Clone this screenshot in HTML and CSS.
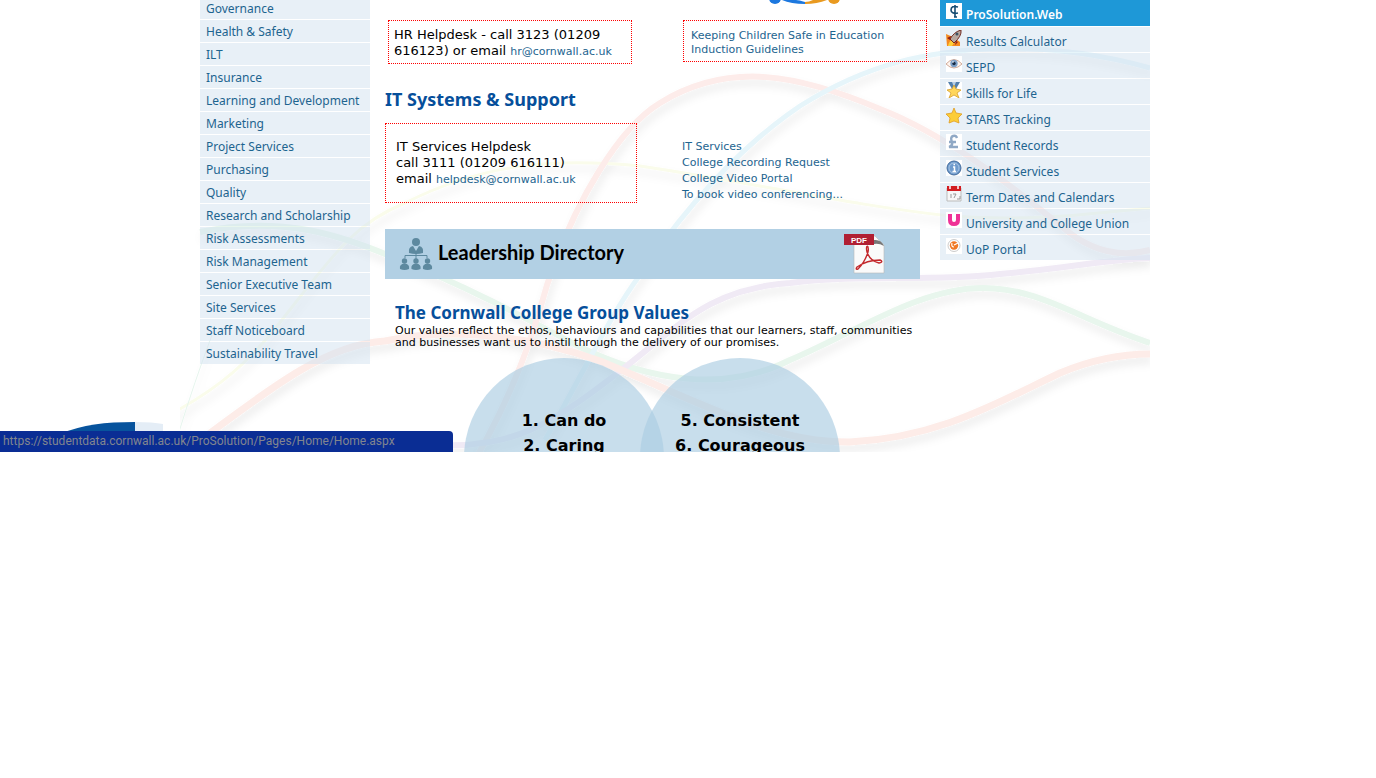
FILE: index.html
```html
<!DOCTYPE html>
<html lang="en">
<head>
<meta charset="utf-8">
<title>Staff Intranet</title>
<link rel="stylesheet" href="styles.css">
</head>
<body>
<div class="screen">
  <svg class="corner-logo" width="100" height="30" viewBox="0 0 100 30" aria-hidden="true"><path d="M0 11C18 3 42 0 72 0V30H0Z" fill="#07539d"/><path d="M72 0Q90 0 100 2V30H72Z" fill="#e4edf6"/></svg>
  <div class="page">
    <svg class="ribbons" viewBox="180 0 970 452" preserveAspectRatio="none" aria-hidden="true">
      <defs><filter id="soft" x="-5%" y="-5%" width="110%" height="115%"><feDropShadow dx="2" dy="6" stdDeviation="4" flood-color="#000" flood-opacity=".08"/></filter></defs>
      <g fill="none" filter="url(#soft)">
        <path d="M150 425C210 395 240 370 270 335C330 260 350 225 405 203C480 165 550 157 640 166C760 184 850 205 950 216C1030 222 1090 214 1150 208" stroke="#fafceb" stroke-width="3"/>
        <path d="M178 435Q195 380 212 335" stroke="#e6f5ed" stroke-width="1"/>
        <path d="M200 232C280 215 340 235 390 256C460 283 520 315 580 347C650 381 725 393 790 360C860 330 920 288 983 288C1040 288 1080 320 1150 343" stroke="#e8f6ed" stroke-width="6"/>
        <path d="M475 460C515 390 533 335 547 285C575 200 620 127 660 103C730 60 800 75 880 109C960 140 1040 210 1060 225C1090 252 1120 258 1150 250" stroke="#fdecea" stroke-width="6"/>
        <path d="M545 440C585 370 610 315 640 275C680 215 735 150 800 106C870 62 930 51 1000 48Q1080 48 1150 68" stroke="#e6f5fa" stroke-width="5"/>
        <path d="M440 445C510 448 550 426 615 375C680 325 710 288 790 283C860 274 930 282 1000 274C1070 268 1110 259 1150 258" stroke="#f0eaf5" stroke-width="6"/>
        <path d="M190 448C280 380 330 344 385 341C460 325 540 339 600 361C700 402 770 443 850 442C940 438 1000 401 1060 373Q1105 354 1150 354" stroke="#fdece8" stroke-width="7"/>
      </g>
    </svg>

    <nav class="departments" aria-label="Departments">
      <a href="#">Governance</a>
      <a href="#">Health &amp; Safety</a>
      <a href="#">ILT</a>
      <a href="#">Insurance</a>
      <a href="#">Learning and Development</a>
      <a href="#">Marketing</a>
      <a href="#">Project Services</a>
      <a href="#">Purchasing</a>
      <a href="#">Quality</a>
      <a href="#">Research and Scholarship</a>
      <a href="#">Risk Assessments</a>
      <a href="#">Risk Management</a>
      <a href="#">Senior Executive Team</a>
      <a href="#">Site Services</a>
      <a href="#">Staff Noticeboard</a>
      <a href="#">Sustainability Travel</a>
    </nav>

    <main class="content">
      <svg class="people-logo" width="72" height="5" viewBox="0 0 72 5" aria-hidden="true"><path d="M13 0Q22 4 36 4V2Q30 0 27 0Z" fill="#1d78df"/><path d="M36 4Q48 4 58 0H44Q40 2 36 2Z" fill="#e99a20"/><circle cx="6" cy="-2" r="6" fill="#1d78df"/><circle cx="65" cy="-2" r="6" fill="#e99a20"/></svg>
      <div class="hr-row">
        <p class="box hr-box">HR Helpdesk - call 3123 (01209 616123) or email <a href="#">hr@cornwall.ac.uk</a></p>
        <div class="box guide-box"><a href="#">Keeping Children Safe in Education</a><a href="#">Induction Guidelines</a></div>
      </div>
      <h2 class="it-title">IT Systems &amp; Support</h2>
      <div class="it-row">
        <p class="box it-box">IT Services Helpdesk<br>call 3111 (01209 616111)<br>email <a href="#">helpdesk@cornwall.ac.uk</a></p>
        <div class="it-links"><a href="#">IT Services</a><a href="#">College Recording Request</a><a href="#">College Video Portal</a><a href="#">To book video conferencing...</a></div>
      </div>
      <a class="banner" href="#">
        <svg width="34" height="34" viewBox="0 0 34 34" fill="#5d899f" aria-hidden="true"><circle cx="17" cy="5" r="4"/><path d="M10 16Q9 10 14 9L17 14L20 9Q25 10 24 16Q17 18 10 16Z"/><path d="M17 16V23M6 21V18.500H28V21" fill="none" stroke="#5d899f"/><g id="member"><circle cx="5.500" cy="24" r="2.700"/><path d="M1 32Q0 27 5.500 26.500Q11 27 10 32Q5.500 34 1 32Z"/></g><use href="#member" x="11.500"/><use href="#member" x="23"/></svg>
        <span class="banner-text">Leadership Directory</span>
        <svg width="42" height="42" viewBox="0 0 42 42" aria-hidden="true"><path d="M11 3H32L41 12V40H11Z" fill="#fafafa" stroke="#bbb" stroke-width=".6"/><path d="M31 7Q38 6 41 13Q36 10 31 11Z" fill="#777"/><rect x="1" y="1" width="30" height="11" fill="#b01f33"/><text x="8" y="10" class="pdf-label">PDF</text><path d="M24 13Q26 14 25 19Q22 29 15 36Q12 37 14 34Q24 27 37 27Q41 29 36 30Q27 28 24 19Q23 15 24 13" fill="none" stroke="#c3282c" stroke-width="1.400"/></svg>
      </a>
      <section class="values">
        <h2>The Cornwall College Group Values</h2>
        <p>Our values reflect the ethos, behaviours and capabilities that our learners, staff, communities and businesses want us to instil through the delivery of our promises.</p>
        <div class="circles">
          <div class="circle">1. Can do<br>2. Caring</div>
          <div class="circle">5. Consistent<br>6. Courageous</div>
        </div>
      </section>
    </main>

    <nav class="systems" aria-label="Systems">
      <a class="active" href="#"><svg viewBox="0 0 16 16"><path fill="#fff" d="M0 0h16v16H0z"/><path d="M12 4Q5 2 5 7Q5 11 12 10M9 2V14M8 14H11" fill="none" stroke="#174d72" stroke-width="1.600"/></svg>ProSolution.Web</a>
      <a href="#"><svg viewBox="0 0 16 16"><path d="M0 4L7 7L14 12V16H1Z" fill="#f58a20"/><path d="M2 16Q3 11 6 10L8 13L6 16Z" fill="#ffcf39"/><path d="M4 9Q8 2 15 0Q16 6 8 13Z" fill="#b8a8a0" stroke="#732b20"/><path d="M5 6L1 8L4 10M10 11L9 15L12 12" fill="#8e2019"/><circle cx="11" cy="4" r="1.500" fill="#3d5364"/></svg>Results Calculator</a>
      <a href="#"><svg viewBox="0 0 16 16"><path fill="#fff" d="M0 0h16v16H0z"/><path d="M0 8Q8-1 16 8Q8 16 0 8" fill="#fff5ee" stroke="#d1ab9a"/><circle cx="8" cy="7.500" r="3.700" fill="#7c9fc6"/><circle cx="8" cy="7.500" r="1.700" fill="#182b45"/><circle cx="7" cy="6" r=".8" fill="#fff"/></svg>SEPD</a>
      <a href="#"><svg viewBox="0 0 16 16"><path fill="#fff" d="M0 0h16v16H0z"/><path d="M2 0H14L10 7H6Z" fill="#527fac"/><path d="M6 0H10L8 5Z" fill="#b9cfe4"/><path d="M8 3L10 7L15 8L11 11L13 16L8 13L3 16L5 11L1 8L6 7Z" fill="#ffd65b" stroke="#d6a02c" stroke-width=".8"/></svg>Skills for Life</a>
      <a href="#"><svg viewBox="0 0 16 16"><path d="M8 0L10 5L16 6L12 10L13 15L8 13L3 15L4 10L0 6L6 5Z" fill="#fccd38" stroke="#df9d22" stroke-width=".8"/></svg>STARS Tracking</a>
      <a href="#"><svg viewBox="0 0 16 16"><path fill="#fff" d="M0 0h16v16H0z"/><path d="M11 4Q10 1 7 2Q4 3 6 8Q7 12 3 13H12M3 8H10" fill="none" stroke="#8fa8c5" stroke-width="2.400"/></svg>Student Records</a>
      <a href="#"><svg viewBox="0 0 16 16"><path fill="#fff" d="M0 0h16v16H0z"/><circle cx="8" cy="8" r="7" fill="#6f9bcd" stroke="#416b9c"/><circle cx="8" cy="8" r="5" fill="none" stroke="#a9c5e3"/><path d="M7 7H8.500V11M6.500 11.500H10M7.500 4.500H9" stroke="#fff" stroke-width="1.500" fill="none"/></svg>Student Services</a>
      <a href="#"><svg viewBox="0 0 16 16"><path fill="#f7f7f7" stroke="#bbb" d="M1 2H15V15H1z"/><path d="M1 0H15V5H1Z" fill="#d21c20"/><path d="M4 0V3M12 0V3" stroke="#fff" stroke-width="1.500"/><path d="M5 8V12M7 8H10L8 12M11 13H14V10" stroke="#999" fill="none"/></svg>Term Dates and Calendars</a>
      <a href="#"><svg viewBox="0 0 16 16"><path fill="#fff" d="M0 0h16v16H0z"/><path d="M4 2V8Q4 12 8 12Q12 12 12 8V2" fill="none" stroke="#ef3297" stroke-width="4"/></svg>University and College Union</a>
      <a href="#"><svg viewBox="0 0 16 16"><path fill="#fff" d="M0 0h16v16H0z"/><circle cx="8" cy="7.500" r="6" fill="none" stroke="#ccc"/><circle cx="8" cy="7.500" r="4.200" fill="#f07925"/><path d="M8 7L12 5M6 5Q5 9 8 9" stroke="#fff" stroke-width="1.200" fill="none"/></svg>UoP Portal</a>
    </nav>
  </div>
  <div class="status">https://studentdata.cornwall.ac.uk/ProSolution/Pages/Home/Home.aspx</div>
</div>
</body>
</html>
```
FILE: styles.css
```css
* { box-sizing: border-box; }
body {
  margin: 0;
  background: #fff;
  color: #000;
  font-family: "DejaVu Sans", Verdana, sans-serif;
  font-size: 13px;
}
a { color: #1d648f; text-decoration: none; }
h2, p { margin: 0; }
h2 {
  color: #064f9b;
  font-family: "Noto Sans", sans-serif;
  font-size: 17px;
  line-height: 20px;
}
.screen {
  position: relative;
  height: 452px;
  overflow: hidden;
  padding-right: 26px;
}
.page {
  position: relative;
  display: grid;
  grid-template-columns: 170px minmax(0, 1fr) 210px;
  align-items: start;
  max-width: 950px;
  height: 100%;
  margin: 0 auto;
}
.ribbons {
  position: absolute;
  top: 0;
  left: -20px;
  width: calc(100% + 20px);
  height: 452px;
}
.corner-logo { position: absolute; left: 63px; bottom: 0; }
.departments, .systems {
  position: relative;
  display: flex;
  flex-direction: column;
  gap: 1px;
  font-family: "Noto Sans", sans-serif;
  font-size: 12px;
}
.departments { margin-top: -3px; }
.departments a, .systems a { background: rgba(210, 226, 240, 0.52); }
.departments a { padding: 2px 6px 0; line-height: 20px; }
.systems a {
  display: flex;
  align-items: flex-start;
  gap: 4px;
  height: 25px;
  padding: 3px 6px 0;
  line-height: 24px;
  white-space: nowrap;
}
.systems svg { flex: none; width: 16px; height: 16px; }
.systems .active { height: 26px; background: #1e98d7; color: #fff; font-weight: 600; }
.content { position: relative; padding: 20px 20px 0 15px; }
.people-logo { position: absolute; top: 0; left: 399px; }
.box { border: 1px dotted #f00; }
.box a, .it-links a { font-size: 11px; }
.box p a, p.box a { line-height: 1; }
.hr-row {
  display: grid;
  grid-template-columns: 244px 244px;
  align-items: start;
  gap: 51px;
  margin-left: 3px;
}
.hr-box { padding: 6px 5px 4px; line-height: 16px; }
.guide-box { display: flex; flex-direction: column; padding: 8px 7px 4px; line-height: 14px; }
.it-title { margin-top: 25px; font-size: 18px; }
.it-row {
  display: grid;
  grid-template-columns: 252px 1fr;
  gap: 45px;
  margin-top: 14px;
}
.it-box { padding: 15px 10px; line-height: 16px; }
.it-links { display: flex; flex-direction: column; padding-top: 16px; line-height: 16px; }
.banner {
  display: flex;
  align-items: center;
  gap: 5px;
  height: 50px;
  margin-top: 26px;
  padding: 0 35px 0 14px;
  background: #b2d0e4;
  color: #000;
}
.banner-text {
  flex: 1;
  padding-bottom: 4px;
  font: bold 20px/26px Lato, sans-serif;
}
.pdf-label { font: bold 8px "Liberation Sans", sans-serif; fill: #fff; }
.values { padding: 24px 0 0 10px; }
.values p { margin-top: 2px; font-size: 11px; line-height: 12px; }
.circles {
  display: flex;
  justify-content: center;
  margin: 9px 0 0;
  padding-right: 11px;
}
.circle {
  flex: none;
  width: 200px;
  height: 200px;
  padding-top: 50px;
  border-radius: 50%;
  background: rgba(172, 205, 226, 0.66);
  font-weight: bold;
  font-size: 16px;
  line-height: 25px;
  text-align: center;
}
.circle + .circle { margin-left: -24px; }
.status {
  position: absolute;
  left: 0;
  bottom: 0;
  width: 453px;
  height: 21px;
  padding-left: 3px;
  border-radius: 0 4px 0 0;
  background: #0a2d94;
  color: #81858f;
  font: 12px/21px Roboto, sans-serif;
}
```
